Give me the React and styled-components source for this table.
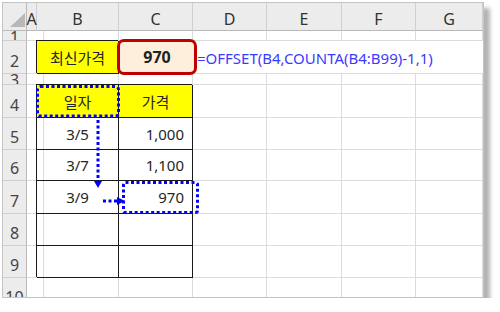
import React from "react";
import styled, { createGlobalStyle, css } from "styled-components";

const YELLOW = "#ffff00";
const GRID = "#dcdcdc";
const HEAD_BG = "#ececec";
const HEAD_LINE = "#cfcfcf";
const HEAD_EDGE = "#b9b9b9";

const GlobalStyle = createGlobalStyle`
  * { box-sizing: border-box; }
  body {
    margin: 0;
    background: #fff;
    font-family: "Noto Sans", "Noto Sans CJK KR", sans-serif;
  }
`;

const Page = styled.div`
  padding: 2px 0 0 2px;
`;

const Sheet = styled.div`
  position: relative;
  width: 482px;
  height: 296px;
  border: 1px solid #c4c4c4;
  background: #fff;
  overflow: hidden;
  box-shadow: 6px 6px 4px #b4b4b4;
`;

const Grid = styled.div`
  display: grid;
  grid-template-columns: 24px 10px 82px 74px 74px 75px 74px 67px;
  grid-template-rows: 28px 10px 33px 11px 33px 32px 31px 33px 32px 32px 32px;
`;

const Corner = styled.div`
  display: flex;
  align-items: flex-end;
  justify-content: flex-end;
  padding: 0 1px 3px 0;
  background: ${HEAD_BG};
  border-right: 1px solid ${HEAD_EDGE};
  border-bottom: 1px solid ${HEAD_EDGE};
`;

const CornerMark = styled.div`
  width: 15px;
  height: 14px;
  background: #b8b8b8;
  clip-path: polygon(100% 0, 100% 100%, 0 100%);
`;

const ColHead = styled.div`
  display: flex;
  align-items: flex-end;
  justify-content: center;
  padding-bottom: 2px;
  background: ${HEAD_BG};
  border-right: 1px solid ${HEAD_LINE};
  border-bottom: 1px solid ${HEAD_EDGE};
  font-size: 16px;
  line-height: 18px;
  color: #333;
`;

const RowHead = styled.div`
  display: flex;
  justify-content: center;
  align-items: ${(p) => (p.$short ? "flex-start" : "flex-end")};
  padding-bottom: 3px;
  overflow: hidden;
  background: ${HEAD_BG};
  border-right: 1px solid ${HEAD_EDGE};
  border-bottom: 1px solid ${HEAD_LINE};
  font-size: 16px;
  line-height: 18px;
  color: #444;

  span {
    margin-top: ${(p) => (p.$short ? "-3px" : "0")};
  }
`;

const Cell = styled.div`
  display: flex;
  align-items: center;
  justify-content: ${(p) => (p.$align === "right" ? "flex-end" : "center")};
  padding: 0 8px;
  border-right: 1px solid ${GRID};
  border-bottom: 1px solid ${GRID};
  background: ${(p) => p.$fill || "transparent"};
  font-size: 15px;
  color: #262626;
  white-space: nowrap;

  ${(p) =>
    p.$boxed &&
    css`
      position: relative;
      z-index: 1;
      border-color: #1a1a1a;
      box-shadow: -1px -1px 0 #1a1a1a;
    `}
`;

const PriceBox = styled.div`
  position: relative;
  z-index: 2;
  margin: -2px -4px -1px -2px;
  display: flex;
  align-items: center;
  justify-content: center;
  border: 3.5px solid #c00000;
  border-radius: 7px;
  background: #fdefdb;
  font-size: 16px;
  font-weight: 700;
  color: #222;
`;

const Formula = styled.div`
  grid-column: span 4;
  display: flex;
  align-items: center;
  padding: 2px 0 0 4px;
  border-bottom: 1px solid ${GRID};
  font-size: 15px;
  color: #3b3bff;
  white-space: nowrap;
`;

const Marks = styled.svg`
  position: absolute;
  top: 0;
  left: 0;
  z-index: 3;
  pointer-events: none;
`;

const columns = ["A", "B", "C", "D", "E", "F", "G"];

const rows = [
  { n: 1, short: true },
  {
    n: 2,
    b: { text: "최신가격", fill: YELLOW },
    price: "970",
    formula: "=OFFSET(B4,COUNTA(B4:B99)-1,1)",
  },
  { n: 3, short: true },
  { n: 4, b: { text: "일자", fill: YELLOW }, c: { text: "가격", fill: YELLOW } },
  { n: 5, b: { text: "3/5" }, c: { text: "1,000", align: "right" } },
  { n: 6, b: { text: "3/7" }, c: { text: "1,100", align: "right" } },
  { n: 7, b: { text: "3/9" }, c: { text: "970", align: "right" } },
  { n: 8, b: {}, c: {} },
  { n: 9, b: {}, c: {} },
  { n: 10 },
];

function Annotations() {
  const dot = { stroke: "#0000ff", strokeWidth: 3, strokeDasharray: "3 2.5", fill: "none" };
  return (
    <Marks width="480" height="294" viewBox="0 0 480 294">
      <rect x="34.5" y="83.5" width="81" height="29.5" rx="3" {...dot} />
      <line x1="95" y1="117" x2="95" y2="179" {...dot} />
      <polygon points="91,178 99,178 95,185" fill="#0000ff" />
      <line x1="100" y1="198" x2="115" y2="198" {...dot} />
      <polygon points="114,194 122,198 114,202" fill="#0000ff" />
      <rect x="120.5" y="179.5" width="74" height="30" rx="2" {...dot} />
    </Marks>
  );
}

function SheetRow({ row }) {
  return (
    <>
      <RowHead $short={row.short}>
        <span>{row.n}</span>
      </RowHead>
      <Cell />
      {row.b ? (
        <Cell $boxed $fill={row.b.fill}>
          {row.b.text}
        </Cell>
      ) : (
        <Cell />
      )}
      {row.price ? (
        <PriceBox>{row.price}</PriceBox>
      ) : row.c ? (
        <Cell $boxed $fill={row.c.fill} $align={row.c.align}>
          {row.c.text}
        </Cell>
      ) : (
        <Cell />
      )}
      {row.formula ? (
        <Formula>{row.formula}</Formula>
      ) : (
        columns.slice(3).map((c) => <Cell key={c} />)
      )}
    </>
  );
}

export default function App() {
  return (
    <Page>
      <GlobalStyle />
      <Sheet>
        <Grid>
          <Corner>
            <CornerMark />
          </Corner>
          {columns.map((c) => (
            <ColHead key={c}>{c}</ColHead>
          ))}
          {rows.map((row) => (
            <SheetRow key={row.n} row={row} />
          ))}
        </Grid>
        <Annotations />
      </Sheet>
    </Page>
  );
}
